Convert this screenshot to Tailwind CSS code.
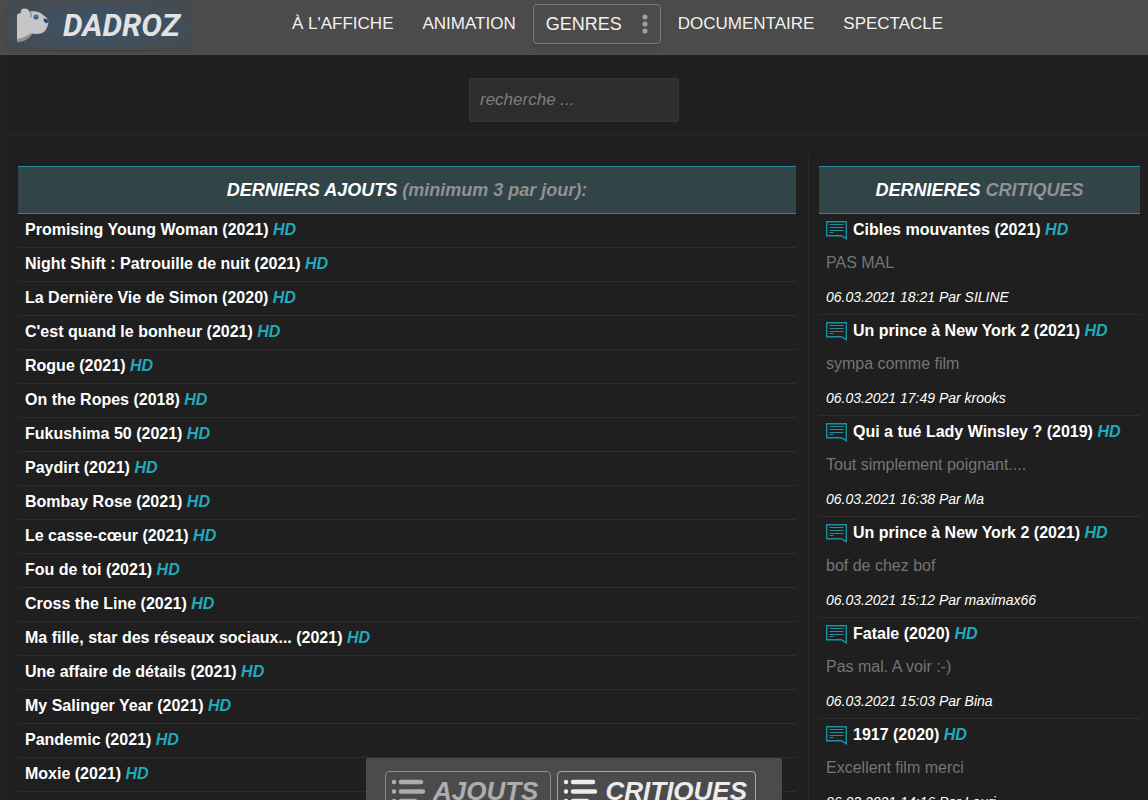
<!DOCTYPE html>
<html lang="fr">
<head>
  <meta charset="UTF-8" />
  <meta name="viewport" content="width=device-width, initial-scale=1.0" />
  <title>DADROZ - Derniers ajouts</title>
  <script src="https://cdn.jsdelivr.net/npm/@tailwindcss/browser@4"></script>
</head>
<body class="bg-[#212121] font-['Liberation_Sans',Arial,sans-serif] text-white min-h-screen">

  <!-- Header -->
  <header class="bg-[#4b4b4b] border-b border-[#505050] flex items-start h-[55px] px-[7px]">
    <a href="#" class="mt-0.5 flex h-12 w-[183px] shrink-0 items-center rounded-xs bg-radial from-[#3c5468] to-[#444a4f] shadow-sm">
      <svg class="ml-2 h-10 w-10" viewBox="0 0 40 40" aria-hidden="true">
        <path d="M2 36V30Q9 29 13 25L18 27Q13 35 5 36Z" fill="#8f8f8f" />
        <path d="M2 33V9Q3 7 6 7Q5 2.5 9.5 2.5Q13 2.5 14.5 5.5Q24 4.5 28 9Q33 12 33.5 16Q32 26 26 27.5Q20 28.5 16 27Q10 32 2 33Z" fill="#c6c6c6" />
        <path d="M14.5 5.5Q17.5 8 15.5 11.5" fill="none" stroke="#969696" stroke-width="1.5" />
        <circle cx="21" cy="11" r="2.5" fill="#2f5c8a" />
        <circle cx="20.5" cy="10.3" r="0.8" fill="#7d9fc0" />
        <path d="M28.5 12.500Q33 12.5 33.5 15.5Q32 18 30.5 17Q28 15 28.5 12.500Z" fill="#1f4a80" />
      </svg>
      <span class="ml-2 font-[Roboto,sans-serif] text-[31px] font-bold italic text-[#e2e2e2]">DADROZ</span>
    </a>
    <nav class="ml-22 mt-1 flex h-10 items-center gap-px text-[17px] text-[#f2f2f2]">
      <a href="#" class="px-3.5">À L'AFFICHE</a>
      <a href="#" class="px-3.5">ANIMATION</a>
      <button type="button" class="mx-0.5 flex h-10 w-32 items-center justify-between rounded-sm border border-[#7a7a7a] px-3 text-lg shadow-md">
        GENRES
        <svg class="h-5 w-1.5" viewBox="0 0 6 20" fill="#a0a0a0" aria-hidden="true">
          <circle cx="3" cy="3" r="2.5" /><circle cx="3" cy="10" r="2.5" /><circle cx="3" cy="17" r="2.5" />
        </svg>
      </button>
      <a href="#" class="px-3.5">DOCUMENTAIRE</a>
      <a href="#" class="px-3.5">SPECTACLE</a>
    </nav>
  </header>

  <main class="ml-2 bg-[#1f1f1f]">
    <!-- Search -->
    <form class="flex h-20 items-center justify-center border-b border-[#272727] pr-2 pt-2.5" onsubmit="return false">
      <input type="search" aria-label="recherche" placeholder="recherche ..." class="h-11 w-[210px] rounded-xs border border-[#373737] bg-[#2d2d2d] px-2.5 text-[17px] italic placeholder:text-[#7d7d7d]" />
    </form>

    <div class="mt-5 grid grid-cols-[1fr_340px]">
      <!-- Derniers ajouts -->
      <section class="pl-2.5 pr-3 pt-[11px]">
        <h2 class="flex h-12 items-center justify-center border-y border-[#218b99] bg-[#314448] text-lg font-bold italic">
          <span>DERNIERS AJOUTS <span class="text-[#919191]">(minimum 3 par jour):</span></span>
        </h2>
        <ul id="ajouts"></ul>
      </section>

      <!-- Dernieres critiques -->
      <section class="border-l border-[#292929] pl-2.5 pr-2 pt-[11px]">
        <h2 class="flex h-12 items-center justify-center border-y border-[#218b99] bg-[#314448] text-lg font-bold italic">
          <span>DERNIERES <span class="text-[#919191]">CRITIQUES</span></span>
        </h2>
        <ul id="critiques"></ul>
      </section>
    </div>
  </main>

  <!-- Bottom bar -->
  <div class="fixed -bottom-5 left-1/2 flex h-[62px] w-[416px] -translate-x-1/2 gap-1.5 rounded-t-xs bg-[#4b4b4b] pl-[19px] pt-[13px] text-[26px] font-bold italic">
    <button type="button" class="flex h-10 items-center gap-1.5 rounded-sm border border-[#8c8c8c] pl-[5px] pr-3 text-[#adadad]">
      <svg class="h-8 w-9" viewBox="0 0 36 32" fill="none" stroke="currentColor" stroke-width="4.5" stroke-linecap="round" aria-hidden="true">
        <path d="M3 7h0M10 7h20M3 16.5h0M10 16.5h22M3 26h0M10 26h14" />
      </svg>
      AJOUTS
    </button>
    <button type="button" class="flex h-10 items-center gap-1.5 rounded-sm border border-[#a5a5a5] pl-[5px] pr-2 text-[#ececec]">
      <svg class="h-8 w-9" viewBox="0 0 36 32" fill="none" stroke="currentColor" stroke-width="4.5" stroke-linecap="round" aria-hidden="true">
        <path d="M3 7h0M10 7h20M3 16.5h0M10 16.5h22M3 26h0M10 26h14" />
      </svg>
      CRITIQUES
    </button>
  </div>

  <script>
    const ajouts = [
      "Promising Young Woman (2021)",
      "Night Shift : Patrouille de nuit (2021)",
      "La Dernière Vie de Simon (2020)",
      "C'est quand le bonheur (2021)",
      "Rogue (2021)",
      "On the Ropes (2018)",
      "Fukushima 50 (2021)",
      "Paydirt (2021)",
      "Bombay Rose (2021)",
      "Le casse-cœur (2021)",
      "Fou de toi (2021)",
      "Cross the Line (2021)",
      "Ma fille, star des réseaux sociaux... (2021)",
      "Une affaire de détails (2021)",
      "My Salinger Year (2021)",
      "Pandemic (2021)",
      "Moxie (2021)"
    ];

    const critiques = [
      { film: "Cibles mouvantes (2021)", text: "PAS MAL", date: "06.03.2021 18:21", author: "SILINE" },
      { film: "Un prince à New York 2 (2021)", text: "sympa comme film", date: "06.03.2021 17:49", author: "krooks" },
      { film: "Qui a tué Lady Winsley ? (2019)", text: "Tout simplement poignant....", date: "06.03.2021 16:38", author: "Ma" },
      { film: "Un prince à New York 2 (2021)", text: "bof de chez bof", date: "06.03.2021 15:12", author: "maximax66" },
      { film: "Fatale (2020)", text: "Pas mal. A voir :-)", date: "06.03.2021 15:03", author: "Bina" },
      { film: "1917 (2020)", text: "Excellent film merci", date: "06.03.2021 14:16", author: "Lauri" }
    ];

    document.getElementById("ajouts").innerHTML = ajouts.map(film => `
      <li class="h-[34px] border-b border-[#2d2d2d] px-[7px] font-bold leading-8">
        <a href="#">${film} <i class="text-[#1fabbd]">HD</i></a>
      </li>`).join("");

    document.getElementById("critiques").innerHTML = critiques.map(c => `
      <li class="h-[101px] border-b border-[#2d2d2d] px-[7px]">
        <a href="#" class="flex h-8 items-center font-bold">
          <svg class="mr-1.5 h-5 w-[21px] shrink-0" viewBox="0 0 21 20" fill="none" stroke="#1b919f" aria-hidden="true">
            <path d="M.7 1.7h19.6v17l-5-3H.7z" stroke-width="1.4" />
            <path d="M3.500 4.5h14M3.500 7.5h14M3.500 10.5h14M3.500 12.500h4" stroke-width="1.2" />
          </svg>
          <span>${c.film} <i class="text-[#1fabbd]">HD</i></span>
        </a>
        <p class="leading-[34px] text-[#757575]">${c.text}</p>
        <p class="text-sm leading-[34px] italic">${c.date} Par ${c.author}</p>
      </li>`).join("");
  </script>
</body>
</html>
